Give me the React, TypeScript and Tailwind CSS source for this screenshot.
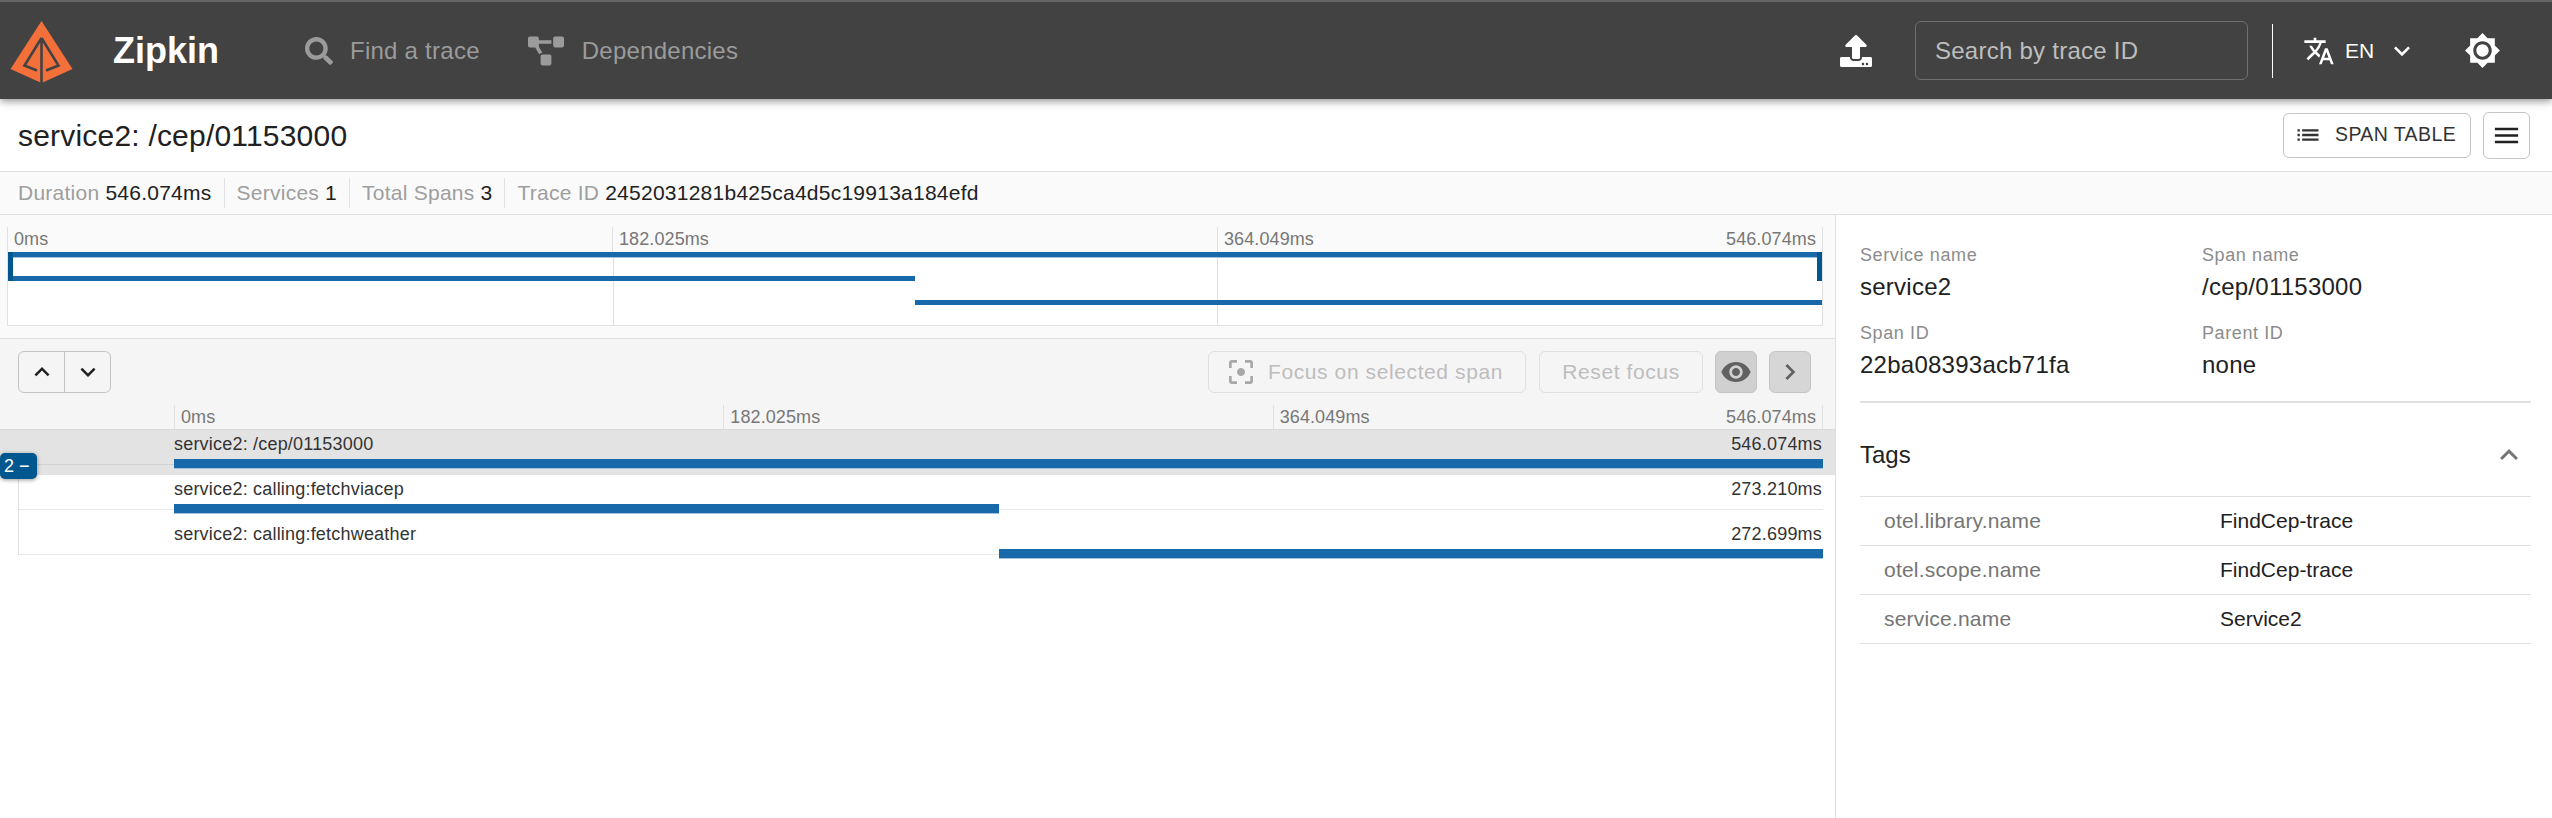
import {
  FaProjectDiagram,
  FaSearch,
  FaUpload,
} from "react-icons/fa";
import {
  MdBrightness7,
  MdChevronRight,
  MdExpandMore,
  MdFilterCenterFocus,
  MdKeyboardArrowDown,
  MdKeyboardArrowUp,
  MdList,
  MdMenu,
  MdTranslate,
  MdVisibility,
} from "react-icons/md";

function Logo() {
  return (
    <svg width="64" height="66" viewBox="0 0 64 66" className="shrink-0 mt-[5px]">
      <path d="M31.5 1 L62.5 49 L31.5 63 L0.5 49 Z" fill="#f4703a" />
      <path
        d="M31.5 18 L31.5 64 M31.5 18 L14.5 45.5 L27 50.5 M31.5 18 L48.5 45.5 L36 50.5"
        fill="none"
        stroke="#424242"
        strokeWidth="2.6"
      />
      <path d="M29 30 L29 47 L21 44 Z M34 30 L34 47 L42 44 Z" fill="#f4703a" />
    </svg>
  );
}

function Stat({ label, value, last }: { label: string; value: string; last?: boolean }) {
  return (
    <div className={`flex items-center h-[30px] pr-3 mr-3 ${last ? "" : "border-r border-[#e0e0e0]"}`}>
      <span className="text-[#9e9e9e] mr-[6px]">{label}</span>
      <span className="text-[#212121]">{value}</span>
    </div>
  );
}

function Info({ label, value }: { label: string; value: string }) {
  return (
    <div className="h-[78px]">
      <div className="text-[18px] leading-[20px] tracking-[0.6px] text-[#8c8c8c]">{label}</div>
      <div className="text-[24px] leading-[26px] tracking-[0.25px] mt-[9px] text-[#212121]">{value}</div>
    </div>
  );
}

function TagRow({ name, value }: { name: string; value: string }) {
  return (
    <div className="flex items-center h-[49px] border-b border-[#e0e0e0] pl-6 text-[21px]">
      <div className="w-[336px] text-[#757575] tracking-[0.2px]">{name}</div>
      <div className="text-[#212121]">{value}</div>
    </div>
  );
}

function Ticks() {
  return (
    <>
      <div className="border-l border-[#e0e0e0] pl-[6px]">0ms</div>
      <div className="border-l border-[#e0e0e0] pl-[6px]">182.025ms</div>
      <div className="border-l border-[#e0e0e0] pl-[6px] flex justify-between pr-[6px]">
        <span>364.049ms</span>
        <span>546.074ms</span>
      </div>
    </>
  );
}

function SpanRow({
  name,
  duration,
  left,
  width,
  selected,
}: {
  name: string;
  duration: string;
  left: string;
  width: string;
  selected?: boolean;
}) {
  return (
    <div className={`relative h-[45px] pl-[174px] pr-[12px] ${selected ? "bg-[#e3e3e3]" : ""}`}>
      <div
        className={`absolute top-[34px] right-[12px] h-px ${
          selected ? "left-0 bg-[#d0d0d0]" : "left-[18px] bg-[#e8e8e8]"
        }`}
      />
      <div className="flex justify-between pr-px text-[18px] leading-[29px] tracking-[0.2px] text-[#333]">
        <span>{name}</span>
        <span>{duration}</span>
      </div>
      <div className="relative h-[9px]">
        <div className={`absolute top-0 h-[9px] bg-[#1769aa] shadow-[0_1px_0_#9fc3de] ${left} ${width}`} />
      </div>
    </div>
  );
}

export default function App() {
  return (
    <div className="w-[2552px] h-[818px] overflow-hidden bg-white flex flex-col font-['Liberation_Sans',sans-serif]">
      <header className="relative z-10 h-[99px] shrink-0 bg-[#424242] border-t-[2px] border-[#666] shadow-[0_2px_8px_rgba(0,0,0,0.45)] flex items-center pl-[10px] text-white">
        <Logo />
        <span className="ml-[39px] w-[192px] text-[36px] font-bold">Zipkin</span>
        <FaSearch className="text-[#9b9b9b] w-[28px] h-[28px]" />
        <span className="ml-[17px] text-[24px] tracking-[0.25px] text-[#9b9b9b]">Find a trace</span>
        <FaProjectDiagram className="text-[#9b9b9b] w-[36px] h-[30px] ml-[48px]" />
        <span className="ml-[18px] text-[24px] tracking-[0.25px] text-[#9b9b9b]">Dependencies</span>
        <div className="flex-1" />
        <FaUpload className="w-[32px] h-[32px]" />
        <div className="ml-[43px] w-[333px] h-[59px] border border-[#6f6f6f] rounded-[6px] flex items-center pl-[19px] text-[24px] tracking-[0.25px] text-[#bdbdbd]">
          Search by trace ID
        </div>
        <div className="ml-[24px] w-px h-[54px] bg-white" />
        <MdTranslate className="ml-[30px] w-[32px] h-[32px]" />
        <span className="ml-[10px] w-[29px] text-[21px]">EN</span>
        <MdExpandMore className="ml-[12px] w-[32px] h-[32px]" />
        <MdBrightness7 className="ml-[46px] w-[37px] h-[37px]" />
        <div className="w-[51px]" />
      </header>

      <div className="h-[72px] shrink-0 flex items-center pl-[18px] pr-[22px]">
        <h1 className="text-[30px] tracking-[0.2px] text-[#212121] flex-1">service2: /cep/01153000</h1>
        <button className="h-[45px] w-[188px] border border-[#c4c4c4] rounded-[6px] flex items-center pl-[10px] text-[#333] text-[19.5px] tracking-[0.4px]">
          <MdList className="w-[28px] h-[28px] mr-[13px]" />
          SPAN TABLE
        </button>
        <button className="ml-3 h-[47px] w-[47px] border border-[#c4c4c4] rounded-[6px] flex items-center justify-center text-[#212121]">
          <MdMenu className="w-[31px] h-[31px]" />
        </button>
      </div>

      <div className="h-[44px] shrink-0 bg-[#fafafa] border-y border-[#e0e0e0] flex items-center pl-[18px] text-[21px] tracking-[0.25px]">
        <Stat label="Duration" value="546.074ms" />
        <Stat label="Services" value="1" />
        <Stat label="Total Spans" value="3" />
        <Stat label="Trace ID" value="2452031281b425ca4d5c19913a184efd" last />
      </div>

      <div className="flex-1 flex min-h-0">
        <div className="w-[1836px] shrink-0 border-r border-[#e0e0e0]">
          <div className="h-[124px] bg-[#fafafa] border-b border-[#e0e0e0] pl-[7px] pr-[12px] pt-[12px]">
            <div className="grid grid-cols-3 h-[25px] border-r border-[#e0e0e0] text-[18px] tracking-[0.1px] text-[#777] leading-[25px]">
              <Ticks />
            </div>
            <div className="relative h-[74px] bg-white border-x border-b border-[#e0e0e0] grid grid-cols-3">
              <div />
              <div className="border-l border-[#e0e0e0]" />
              <div className="border-l border-[#e0e0e0]" />
              <div className="absolute left-0 right-0 top-0 h-[5px] bg-[#1769aa] shadow-[0_1px_0_#9fc3de]" />
              <div className="absolute left-0 w-1/2 top-[24px] h-[5px] bg-[#1769aa]" />
              <div className="absolute right-0 w-1/2 top-[48px] h-[5px] bg-[#1769aa]" />
              <div className="absolute left-0 top-0 w-[5px] h-[29px] bg-[#00578f]" />
              <div className="absolute right-0 top-0 w-[5px] h-[29px] bg-[#00578f]" />
            </div>
          </div>

          <div className="bg-[#f5f5f5] h-[90px] pt-[12px] flex items-start pl-[18px] pr-[24px]">
            <div className="flex w-[93px] h-[42px] border border-[#c4c4c4] rounded-[6px] text-[#212121]">
              <div className="w-[46px] flex items-center justify-center border-r border-[#c4c4c4]">
                <MdKeyboardArrowUp className="w-[30px] h-[30px]" />
              </div>
              <div className="flex-1 flex items-center justify-center">
                <MdKeyboardArrowDown className="w-[30px] h-[30px]" />
              </div>
            </div>
            <div className="flex-1" />
            <div className="w-[318px] h-[42px] border border-[#e0e0e0] rounded-[6px] flex items-center pl-[16px] text-[21px] tracking-[0.6px] text-[#bdbdbd]">
              <MdFilterCenterFocus className="w-[32px] h-[32px] mr-[11px] text-[#a8a8a8]" />
              Focus on selected span
            </div>
            <div className="ml-[13px] w-[164px] h-[42px] border border-[#e0e0e0] rounded-[6px] flex items-center justify-center text-[21px] tracking-[0.6px] text-[#bdbdbd]">
              Reset focus
            </div>
            <div className="ml-[12px] w-[42px] h-[42px] border border-[#c4c4c4] bg-[#d0d0d0] rounded-[6px] flex items-center justify-center text-[#616161]">
              <MdVisibility className="w-[32px] h-[32px]" />
            </div>
            <div className="ml-[12px] w-[42px] h-[42px] border border-[#c4c4c4] bg-[#d6d6d6] rounded-[6px] flex items-center justify-center text-[#616161]">
              <MdChevronRight className="w-[32px] h-[32px]" />
            </div>
          </div>

          <div className="h-[24px] -mt-[24px] pl-[174px] pr-[12px] relative">
            <div className="grid grid-cols-3 h-full border-r border-[#e0e0e0] text-[18px] tracking-[0.1px] text-[#777] leading-[25px]">
              <Ticks />
            </div>
          </div>

          <div className="relative border-t border-[#d8d8d8]">
            <SpanRow name="service2: /cep/01153000" duration="546.074ms" left="left-0" width="w-full" selected />
            <SpanRow name="service2: calling:fetchviacep" duration="273.210ms" left="left-0" width="w-1/2" />
            <SpanRow name="service2: calling:fetchweather" duration="272.699ms" left="right-0" width="w-1/2" />
            <div className="absolute left-[18px] top-[45px] bottom-[11px] w-px bg-[#e0e0e0]" />
            <div className="absolute left-0 top-[23px] w-[37px] h-[26px] rounded-[5px] bg-[#00578f] text-white text-[18px] flex items-center pl-[4px] shadow-[0_1px_4px_rgba(0,0,0,0.4)]">
              2 −
            </div>
          </div>
        </div>

        <div className="flex-1 pr-[21px] pl-[24px] pt-[30px]">
          <div className="grid grid-cols-[342px_1fr] h-[158px] border-b-2 border-[#e0e0e0]">
            <Info label="Service name" value="service2" />
            <Info label="Span name" value="/cep/01153000" />
            <Info label="Span ID" value="22ba08393acb71fa" />
            <Info label="Parent ID" value="none" />
          </div>
          <div className="h-[94px] pt-[11px] flex items-center justify-between border-b border-[#e0e0e0]">
            <span className="text-[24px] text-[#212121]">Tags</span>
            <MdKeyboardArrowUp className="w-[36px] h-[36px] text-[#757575] mr-[4px]" />
          </div>
          <TagRow name="otel.library.name" value="FindCep-trace" />
          <TagRow name="otel.scope.name" value="FindCep-trace" />
          <TagRow name="service.name" value="Service2" />
        </div>
      </div>
    </div>
  );
}
